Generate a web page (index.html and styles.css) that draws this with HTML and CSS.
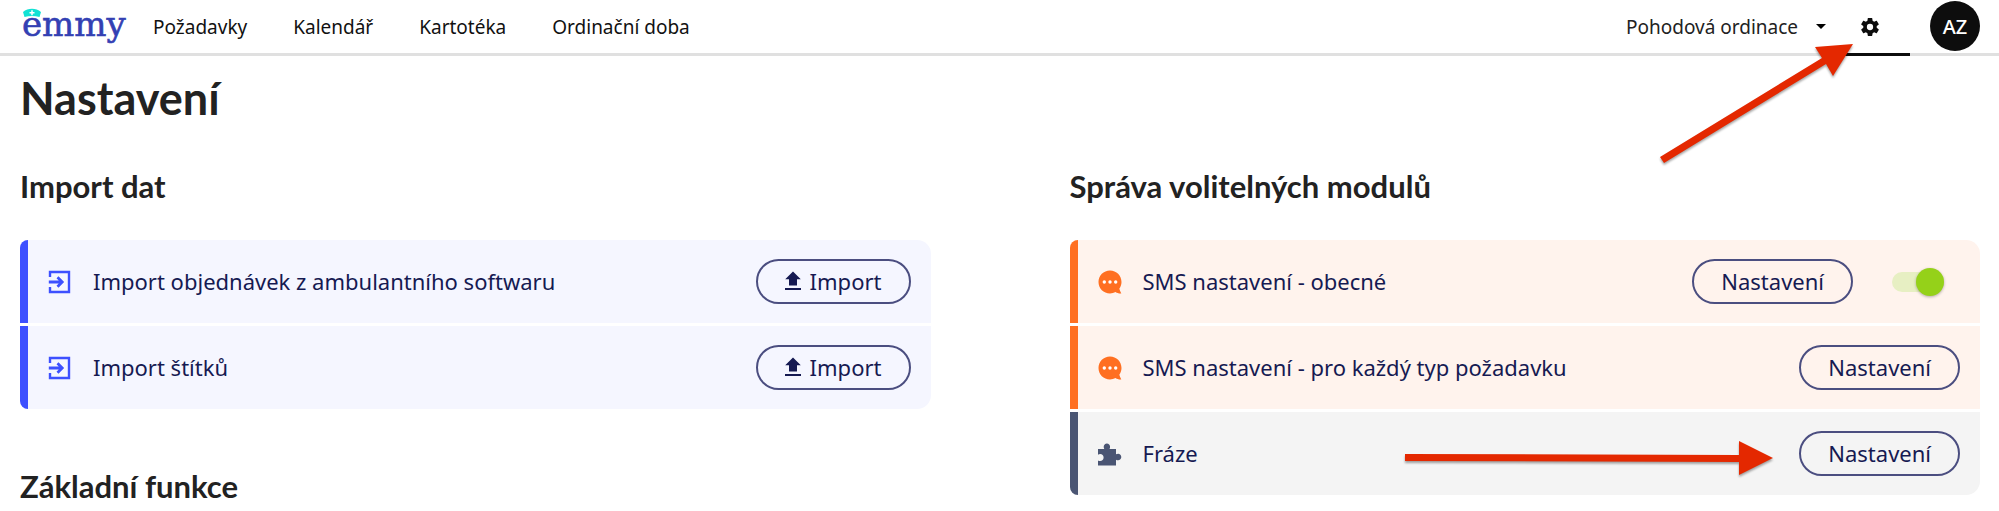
FILE: index.html
```
<!DOCTYPE html>
<html lang="cs">
<head>
  <meta charset="UTF-8">
  <title>Nastavení</title>
  <link rel="stylesheet" href="styles.css">
</head>
<body>

  <!-- Icons -->
  <svg class="sprite" aria-hidden="true">
    <symbol id="i-login" viewBox="0 0 24 24">
      <path d="M2 7V2H21V22H2V17" fill="none" stroke="currentColor" stroke-width="2.400"/>
      <path d="M.8 12H14M9.500 7.300L14.200 12L9.500 16.700" fill="none" stroke="currentColor" stroke-width="2.800"/>
    </symbol>
    <symbol id="i-sms" viewBox="0 0 24 24">
      <path fill="currentColor" d="M12 .5C5.600 .5 .5 5.600 .5 12S5.600 23.500 12 23.500C14 23.500 15.900 23 17.500 22.100C19.300 23.300 21.500 23.800 23.300 23.500C22.500 22 22 20.300 21.300 18.700C22.700 16.800 23.500 14.500 23.500 12C23.500 5.600 18.400 .5 12 .5Z"/>
      <circle cx="6.300" cy="12" r="1.700" fill="#fff"/>
      <circle cx="12" cy="12" r="1.700" fill="#fff"/>
      <circle cx="17.700" cy="12" r="1.700" fill="#fff"/>
    </symbol>
    <symbol id="i-puzzle" viewBox="0 0 24 24">
      <path fill="currentColor" d="M0 7H6.300C5.900 6.300 5.700 5.500 5.700 4.700C5.700 2.800 7.200 1.500 8.900 1.500S12.100 2.800 12.100 4.700C12.100 5.500 11.900 6.300 11.500 7H18V12.300C18.700 11.900 19.400 11.700 20.100 11.700C21.900 11.700 23.300 13.200 23.300 15S21.900 18.300 20.100 18.300C19.400 18.300 18.700 18.100 18 17.700V23.500H0V18.500C.6 18.900 1.400 19.100 2.100 19.100C4.200 19.100 5.600 17.600 5.600 15.600S4.200 12.100 2.100 12.100C1.400 12.100 .6 12.300 0 12.700Z"/>
    </symbol>
    <symbol id="i-upload" viewBox="0 0 16 20">
      <path fill="currentColor" d="M8 .5L15.800 8.300H12V14.500H4V8.300H.2ZM0 17H16V19H0Z"/>
    </symbol>
    <symbol id="i-cog" viewBox="2 2 20 20">
      <path fill="currentColor" d="M12 15.500A3.500 3.500 0 0 1 8.500 12A3.500 3.500 0 0 1 12 8.500A3.500 3.500 0 0 1 15.500 12A3.500 3.500 0 0 1 12 15.500M19.430 12.970C19.470 12.650 19.500 12.330 19.500 12C19.500 11.670 19.470 11.340 19.430 11L21.540 9.370C21.730 9.220 21.780 8.950 21.660 8.730L19.660 5.270C19.540 5.050 19.270 4.960 19.050 5.050L16.560 6.050C16.040 5.660 15.500 5.320 14.870 5.070L14.500 2.420C14.460 2.180 14.250 2 14 2H10C9.750 2 9.540 2.180 9.500 2.420L9.130 5.070C8.500 5.320 7.960 5.660 7.440 6.050L4.950 5.050C4.730 4.960 4.460 5.050 4.340 5.270L2.340 8.730C2.210 8.950 2.270 9.220 2.460 9.370L4.570 11C4.530 11.340 4.500 11.670 4.500 12C4.500 12.330 4.530 12.650 4.570 12.970L2.460 14.630C2.270 14.780 2.210 15.050 2.340 15.270L4.340 18.730C4.460 18.950 4.730 19.030 4.950 18.950L7.440 17.940C7.960 18.340 8.500 18.680 9.130 18.930L9.500 21.580C9.540 21.820 9.750 22 10 22H14C14.250 22 14.460 21.820 14.500 21.580L14.870 18.930C15.500 18.670 16.040 18.340 16.560 17.940L19.050 18.950C19.270 19.030 19.540 18.950 19.660 18.730L21.660 15.270C21.780 15.050 21.730 14.780 21.540 14.630L19.430 12.970Z"/>
    </symbol>
  </svg>

  <header class="topbar">
    <a class="logo" href="#" aria-label="emmy">
      <svg width="108" height="48" viewBox="0 0 108 48">
        <text class="logo-text" x="2" y="36">emmy</text>
        <path class="logo-cap" d="M3 12C8 7.800 16 7.800 21 12L19.500 17C15 15.600 9 15.600 4.500 17Z"/>
        <path d="M12 10.300V15.300M9.500 12.800H14.500" stroke="#fff" stroke-width="1.500"/>
      </svg>
    </a>
    <nav class="menu">
      <a href="#">Požadavky</a>
      <a href="#">Kalendář</a>
      <a href="#">Kartotéka</a>
      <a href="#">Ordinační doba</a>
    </nav>
    <div class="office">
      <select class="office-select" aria-label="Ordinace">
        <option>Pohodová ordinace</option>
      </select>
      <svg class="caret" width="10" height="5" viewBox="0 0 10 5"><path d="M0 0H10L5 5Z"/></svg>
    </div>
    <a class="settings-tab" href="#" aria-label="Nastavení">
      <svg width="18" height="18"><use href="#i-cog"/></svg>
      <svg class="arrow arrow-tab" width="210" height="140" viewBox="0 0 210 140">
        <path d="M12 114L174 15L167 4L205 1L185 33L178 21L16 120Z"/>
      </svg>
    </a>
    <button class="avatar" type="button">AZ</button>
  </header>

  <main class="page">
    <h1>Nastavení</h1>

    <div class="columns">
      <div class="column">
        <section>
          <h2>Import dat</h2>
          <ul class="list">
            <li class="row blue">
              <svg class="icon" width="24" height="24"><use href="#i-login"/></svg>
              <span class="label">Import objednávek z ambulantního softwaru</span>
              <button class="btn" type="button"><svg width="16" height="20"><use href="#i-upload"/></svg>Import</button>
            </li>
            <li class="row blue">
              <svg class="icon" width="24" height="24"><use href="#i-login"/></svg>
              <span class="label">Import štítků</span>
              <button class="btn" type="button"><svg width="16" height="20"><use href="#i-upload"/></svg>Import</button>
            </li>
          </ul>
        </section>
        <section>
          <h2>Základní funkce</h2>
        </section>
      </div>

      <div class="column">
        <section>
          <h2>Správa volitelných modulů</h2>
          <ul class="list">
            <li class="row orange">
              <svg class="icon" width="24" height="24"><use href="#i-sms"/></svg>
              <label class="label" for="sms">SMS nastavení - obecné</label>
              <button class="btn" type="button">Nastavení</button>
              <input class="switch" type="checkbox" id="sms" checked>
            </li>
            <li class="row orange">
              <svg class="icon" width="24" height="24"><use href="#i-sms"/></svg>
              <span class="label">SMS nastavení - pro každý typ požadavku</span>
              <button class="btn" type="button">Nastavení</button>
            </li>
            <li class="row gray">
              <svg class="icon" width="24" height="24"><use href="#i-puzzle"/></svg>
              <span class="label">Fráze</span>
              <button class="btn" type="button">Nastavení</button>
              <svg class="arrow arrow-row" width="380" height="44" viewBox="0 0 380 44">
                <path d="M5 17L339 18V4L373 21L339 38V25L5 24Z"/>
              </svg>
            </li>
          </ul>
        </section>
      </div>
    </div>
  </main>

</body>
</html>
```
FILE: styles.css
```
* {
  box-sizing: border-box;
}

body {
  margin: 0;
  font-family: "Noto Sans", sans-serif;
  font-size: 22px;
  color: #222;
  background-color: #fff;
}

h1, h2 {
  margin: 0;
  font-family: Lato, sans-serif;
  font-weight: 700;
}

h1 {
  margin-bottom: 43px;
  font-size: 45px;
  line-height: 54px;
}

h2 {
  font-size: 31px;
  line-height: 36px;
}

.sprite {
  display: none;
}

/* Top bar */
.topbar {
  display: flex;
  height: 56px;
  padding: 0 19px 0 20px;
  border-bottom: 3px solid #e0e0e0;
  font-size: 19px;
}

.logo {
  margin-right: 25px;
}

.logo-text {
  font-family: "DejaVu Serif", serif;
  font-size: 34px;
  fill: #3340b3;
  stroke: #3340b3;
  stroke-width: 0.6px;
}

.logo-cap {
  fill: #12e2d4;
}

.menu {
  display: flex;
  align-items: center;
  gap: 46px;
}

.menu a {
  color: #111;
  text-decoration: none;
}

.office {
  display: flex;
  align-items: center;
  margin-left: auto;
  gap: 17px;
}

.office-select {
  padding: 0;
  border: none;
  background: none;
  appearance: none;
  font: inherit;
  color: #222;
}

.caret {
  pointer-events: none;
}

.settings-tab {
  position: relative;
  display: flex;
  align-items: center;
  justify-content: center;
  width: 81px;
  height: 56px;
  margin-left: 3px;
  border-bottom: 3px solid #0d0d0d;
  color: #0d0d0d;
}

.avatar {
  width: 50px;
  height: 50px;
  margin: 1px 0 0 20px;
  padding: 0;
  border: none;
  border-radius: 50%;
  background-color: #0d0d0d;
  color: #fff;
  font-family: inherit;
  font-size: 20px;
  font-weight: 500;
}

/* Content */
.page {
  padding: 15px 19px 0 20px;
}

.columns {
  display: grid;
  grid-template-columns: 1fr 1fr;
  gap: 139px;
}

.column {
  display: flex;
  flex-direction: column;
  gap: 59px;
}

.list {
  display: flex;
  flex-direction: column;
  gap: 3px;
  margin: 36px 0 0;
  padding: 0;
  border-radius: 8px 14px 14px 8px;
  overflow: hidden;
  list-style: none;
}

.row {
  position: relative;
  display: flex;
  align-items: center;
  height: 83px;
  padding: 0 20px;
  border-left: 8px solid;
}

.icon {
  margin-right: 21px;
}

.label {
  flex: 1;
  padding-bottom: 2px;
  color: #161a52;
}

.blue {
  border-color: #3d50ff;
  background-color: #f5f6ff;
}

.blue .icon {
  color: #3d50ff;
}

.orange {
  border-color: #ff6f21;
  background-color: #fff3ed;
}

.orange .icon {
  color: #ff6f21;
}

.gray {
  border-color: #4a5573;
  background-color: #f4f4f4;
}

.gray .icon {
  color: #4a5573;
}

.btn {
  display: flex;
  align-items: center;
  gap: 9px;
  height: 45px;
  padding: 0 27px 2px;
  border: 2px solid #4b4e80;
  border-radius: 23px;
  background: none;
  color: #161a52;
  font-family: inherit;
  font-size: 22px;
}

.switch {
  display: flex;
  align-items: center;
  justify-content: flex-end;
  width: 52px;
  height: 20px;
  margin: 0 16px 0 39px;
  border-radius: 10px;
  background-color: #e7efc3;
  appearance: none;
}

.switch::before {
  content: "";
  width: 28px;
  height: 28px;
  border-radius: 50%;
  background-color: #95d119;
  box-shadow: 0 1px 3px rgba(0, 0, 0, 0.3);
}

/* Red arrows */
.arrow {
  position: absolute;
  fill: #e42800;
  filter: drop-shadow(0 2px 1px rgba(0, 0, 0, 0.35));
  pointer-events: none;
}

.arrow-tab {
  top: 43px;
  right: 52px;
}

.arrow-row {
  top: 25px;
  right: 200px;
}
```
